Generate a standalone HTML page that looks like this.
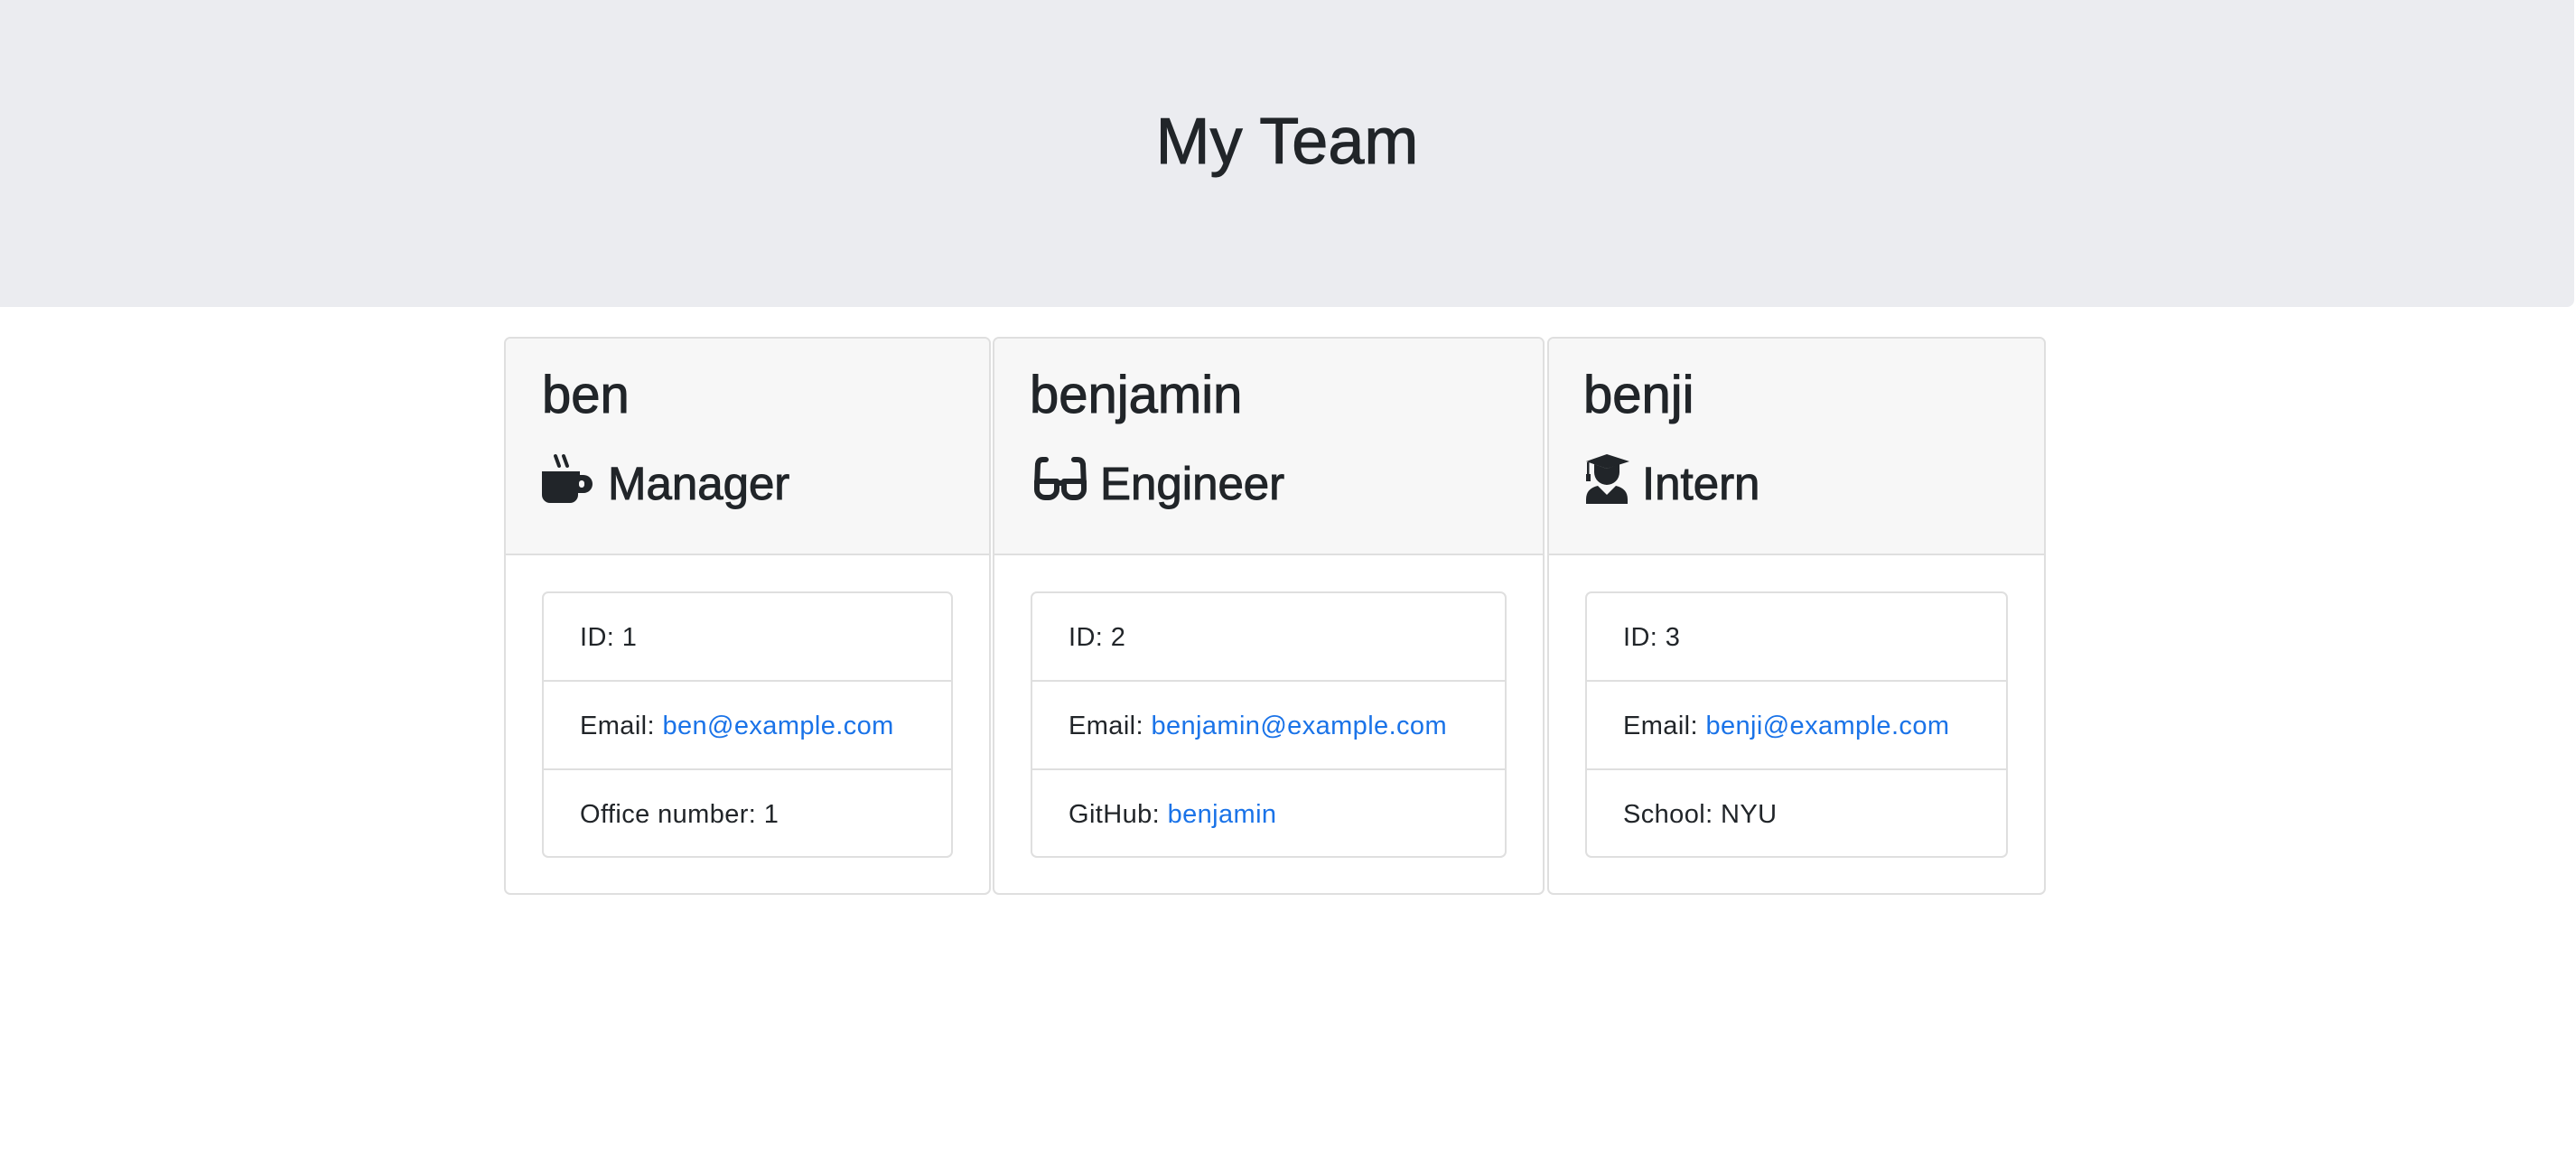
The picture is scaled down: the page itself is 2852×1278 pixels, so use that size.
<!DOCTYPE html>
<html><head><meta charset="utf-8"><style>
*{margin:0;padding:0;box-sizing:border-box}
body{width:2852px;height:1278px;background:#fff;font-family:"Liberation Sans",sans-serif;color:#212529;position:relative;overflow:hidden}
.jum{position:absolute;left:0;top:0;width:2850px;height:340px;background:#ebecf0;border-bottom-right-radius:8px}
.t{position:absolute;line-height:1;white-space:nowrap}
.card{position:absolute;top:373px;height:618px;border:2px solid #dfdfdf;border-radius:7px;overflow:hidden;background:#fff}
.hd{height:240px;background:#f7f7f7;border-bottom:2px solid #dfdfdf}
.lg{position:absolute;top:280px;left:40px;right:40px;height:295px;border:2px solid #dfdfdf;border-radius:7px}
.row{height:98px;border-bottom:2px solid #dfdfdf;font-size:29px;line-height:1;padding:35px 0 0 40px;white-space:nowrap;letter-spacing:0.4px}
.row:last-child{border-bottom:none}
a{color:#1a73e8;text-decoration:none}
</style></head><body>
<div class="jum"></div>
<div class="t" style="top:121px;left:0;width:2850px;text-align:center;font-size:72px;-webkit-text-stroke:1px #212529">My Team</div>

<div class="card" style="left:558px;width:539px"><div class="hd"></div>
<div class="lg"><div class="row">ID: 1</div><div class="row">Email: <a>ben@example.com</a></div><div class="row">Office number: 1</div></div></div>
<div class="card" style="left:1099px;width:611px"><div class="hd"></div>
<div class="lg"><div class="row">ID: 2</div><div class="row">Email: <a>benjamin@example.com</a></div><div class="row">GitHub: <a>benjamin</a></div></div></div>
<div class="card" style="left:1713px;width:552px"><div class="hd"></div>
<div class="lg"><div class="row">ID: 3</div><div class="row">Email: <a>benji@example.com</a></div><div class="row">School: NYU</div></div></div>

<div class="t" style="top:409px;left:600px;font-size:58px;-webkit-text-stroke:1px #212529">ben</div>
<div class="t" style="top:409px;left:1140px;font-size:58px;-webkit-text-stroke:1px #212529">benjamin</div>
<div class="t" style="top:409px;left:1753px;font-size:58px;-webkit-text-stroke:1px #212529">benji</div>
<div class="t" style="top:510px;left:673px;font-size:51px;-webkit-text-stroke:1px #212529">Manager</div>
<div class="t" style="top:510px;left:1218px;font-size:51px;-webkit-text-stroke:1px #212529">Engineer</div>
<div class="t" style="top:510px;left:1818px;font-size:51px;-webkit-text-stroke:1px #212529">Intern</div>

<svg style="position:absolute;left:600px;top:502px" width="58" height="56" viewBox="0 0 58 56">
<path d="M15 3 L19 14 M24 3 L28 14" stroke="#212529" stroke-width="4" stroke-linecap="round" fill="none"/>
<path d="M0 20 H42 V24 H46 A10 10 0 0 1 46 44 H40 V46 A9 9 0 0 1 31 55 H9 A9 9 0 0 1 0 46 Z" fill="#212529"/>
<rect x="41" y="30" width="6" height="8" rx="3" fill="#f7f7f7"/>
</svg>
<svg style="position:absolute;left:1145px;top:505px" width="58" height="51" viewBox="0 0 58 51">
<g stroke="#212529" stroke-width="6" fill="none" stroke-linecap="round" stroke-linejoin="round">
<path d="M13 4 H9 Q5 4 4 9 L3 34"/><path d="M44 4 H48 Q53 4 54 9 L55 34"/>
<path d="M3 28 H25 V37 A9 9 0 0 1 16 46 H12 A9 9 0 0 1 3 37 Z"/><path d="M33 28 H55 V37 A9 9 0 0 1 46 46 H42 A9 9 0 0 1 33 37 Z"/>
<path d="M25 30 H33"/></g></svg>
<svg style="position:absolute;left:1753px;top:503px" width="52" height="56" viewBox="0 0 52 56">
<path d="M3 8 L26 0 L51 8 L26 16 Z" fill="#212529"/>
<path d="M12 11 V20 A14 14 0 0 0 40 20 V11 L26 16 Z" fill="#212529"/>
<rect x="4" y="9" width="2.5" height="14" fill="#212529"/><rect x="3" y="22" width="5" height="8" fill="#212529"/>
<path d="M16 35 L26 45 L36 35 Q49 38 49 50 V55 H3 V50 Q3 38 16 35 Z" fill="#212529"/>
</svg>
</body></html>
